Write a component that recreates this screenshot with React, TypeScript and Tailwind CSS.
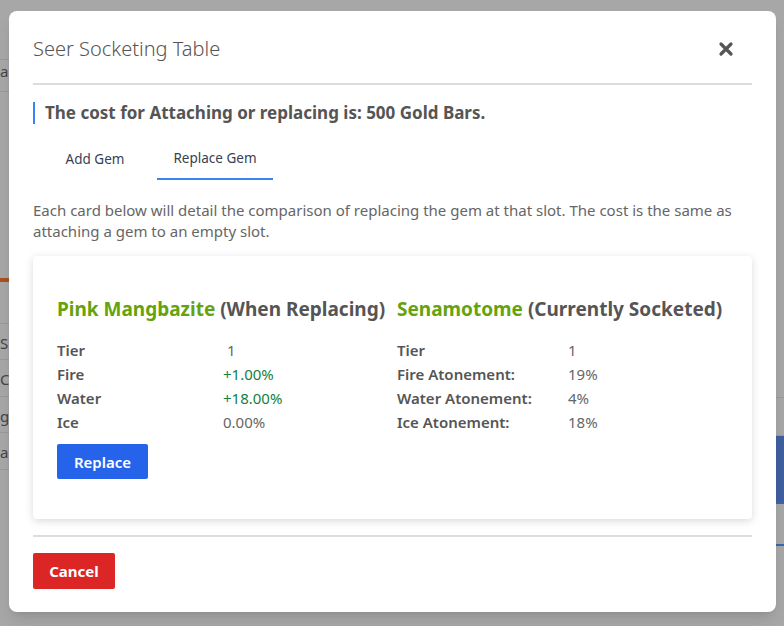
export default function App() {
  const replacing = [
    { label: "Tier", value: " 1", tone: "plain" },
    { label: "Fire", value: "+1.00%", tone: "up" },
    { label: "Water", value: "+18.00%", tone: "up" },
    { label: "Ice", value: "0.00%", tone: "plain" },
  ];
  const socketed = [
    { label: "Tier", value: "1" },
    { label: "Fire Atonement:", value: "19%" },
    { label: "Water Atonement:", value: "4%" },
    { label: "Ice Atonement:", value: "18%" },
  ];

  return (
    <div
      className="relative h-[626px] w-[784px] overflow-hidden bg-[#a7a7a7]"
      style={{ fontFamily: "'Noto Sans', 'Open Sans', sans-serif" }}
    >
      {/* page behind the backdrop */}
      <div className="flex h-full justify-between">
        <div className="flex w-[20px] flex-col">
          <div className="h-[60px] border-b border-[#9a9a9a]" />
          <div className="h-[32px] border-b border-[#9a9a9a] text-[15px] text-[#444]">ar</div>
          <div className="h-[190px] border-b-4 border-[#a8511e]" />
          <div className="h-[42px] border-b border-[#9a9a9a]" />
          <div className="h-[36px] border-b border-[#9a9a9a] pt-2 text-[15px] text-[#444]">S</div>
          <div className="h-[37px] border-b border-[#9a9a9a] pt-2 text-[15px] text-[#444]">C</div>
          <div className="h-[36px] border-b border-[#9a9a9a] pt-2 text-[15px] text-[#444]">gh</div>
          <div className="h-[37px] border-b border-[#9a9a9a] pt-2 text-[15px] text-[#444]">a</div>
        </div>
        <div className="flex w-[20px] flex-col pt-[360px]">
          <div className="h-[38px] border-b border-[#9a9a9a] pt-2 text-[15px] text-[#444]">0</div>
          <div className="h-[38px] border-b border-[#9a9a9a]" />
          <div className="h-[66px] bg-[#3f5f9f]" />
          <div className="h-[44px] border-y-2 border-[#3b64b0]" />
        </div>
      </div>

      {/* modal */}
      <div className="absolute inset-0 pl-[9px] pt-[11px]">
        <div className="w-[767px] rounded-lg bg-white px-6 pb-[23px] shadow-lg">
          <div className="flex items-center justify-between pt-[24px] pb-[20px]">
            <h2 className="text-[20px] font-light leading-[28px] text-[#555]">Seer Socketing Table</h2>
            <svg width="16" height="16" viewBox="0 0 16 16" className="mr-[18px]">
              <path d="M3 3 L13 13 M13 3 L3 13" stroke="#555" strokeWidth="3.2" strokeLinecap="round" />
            </svg>
          </div>
          <div className="h-[2px] bg-[#dddddd]" />

          <div className="mt-[17px] border-l-2 border-[#3b82f6] pl-[10px] text-[17px] font-bold leading-[22px] text-[#555]">
            The cost for Attaching or replacing is: 500 Gold Bars.
          </div>

          <div className="mt-[14px] flex text-[13.5px] text-[#374151]">
            <div className="w-[124px] py-[11px] text-center">Add Gem</div>
            <div className="w-[116px] border-b-2 border-[#3b82f6] py-[10px] text-center">Replace Gem</div>
          </div>

          <p className="mt-[20px] text-[15px] leading-[21px] text-[#666]">
            Each card below will detail the comparison of replacing the gem at that slot. The cost is the same as
            attaching a gem to an empty slot.
          </p>

          <div className="mt-[14px] rounded-sm bg-white px-6 pt-[39px] pb-[40px] shadow-[0_2px_8px_rgba(0,0,0,0.15)]">
            <div className="flex">
              <div className="w-[340px]">
                <h3 className="text-[19px] font-bold leading-[28px] text-[#555]">
                  <span className="text-[#65a30d]">Pink Mangbazite</span> (When Replacing)
                </h3>
                <div className="mt-[15px] text-[15px] leading-[24px]">
                  {replacing.map((r) => (
                    <div key={r.label} className="flex">
                      <span className="w-[166px] font-semibold text-[#555]">{r.label}</span>
                      <span className={r.tone === "up" ? "text-[#15803d]" : "whitespace-pre text-[#666]"}>
                        {r.value}
                      </span>
                    </div>
                  ))}
                </div>
                <button className="mt-[10px] h-[35px] w-[91px] rounded-[2px] bg-[#2563eb] text-[15px] font-semibold text-white">
                  Replace
                </button>
              </div>
              <div className="flex-1">
                <h3 className="text-[19px] font-bold leading-[28px] text-[#555]">
                  <span className="text-[#65a30d]">Senamotome</span> (Currently Socketed)
                </h3>
                <div className="mt-[15px] text-[15px] leading-[24px]">
                  {socketed.map((r) => (
                    <div key={r.label} className="flex">
                      <span className="w-[171px] font-semibold text-[#555]">{r.label}</span>
                      <span className="text-[#666]">{r.value}</span>
                    </div>
                  ))}
                </div>
              </div>
            </div>
          </div>

          <div className="mt-[16px] h-[2px] bg-[#dddddd]" />
          <button className="mt-[16px] h-[36px] w-[82px] rounded-[2px] bg-[#dc2626] text-[15px] font-bold text-white">
            Cancel
          </button>
        </div>
      </div>
    </div>
  );
}
